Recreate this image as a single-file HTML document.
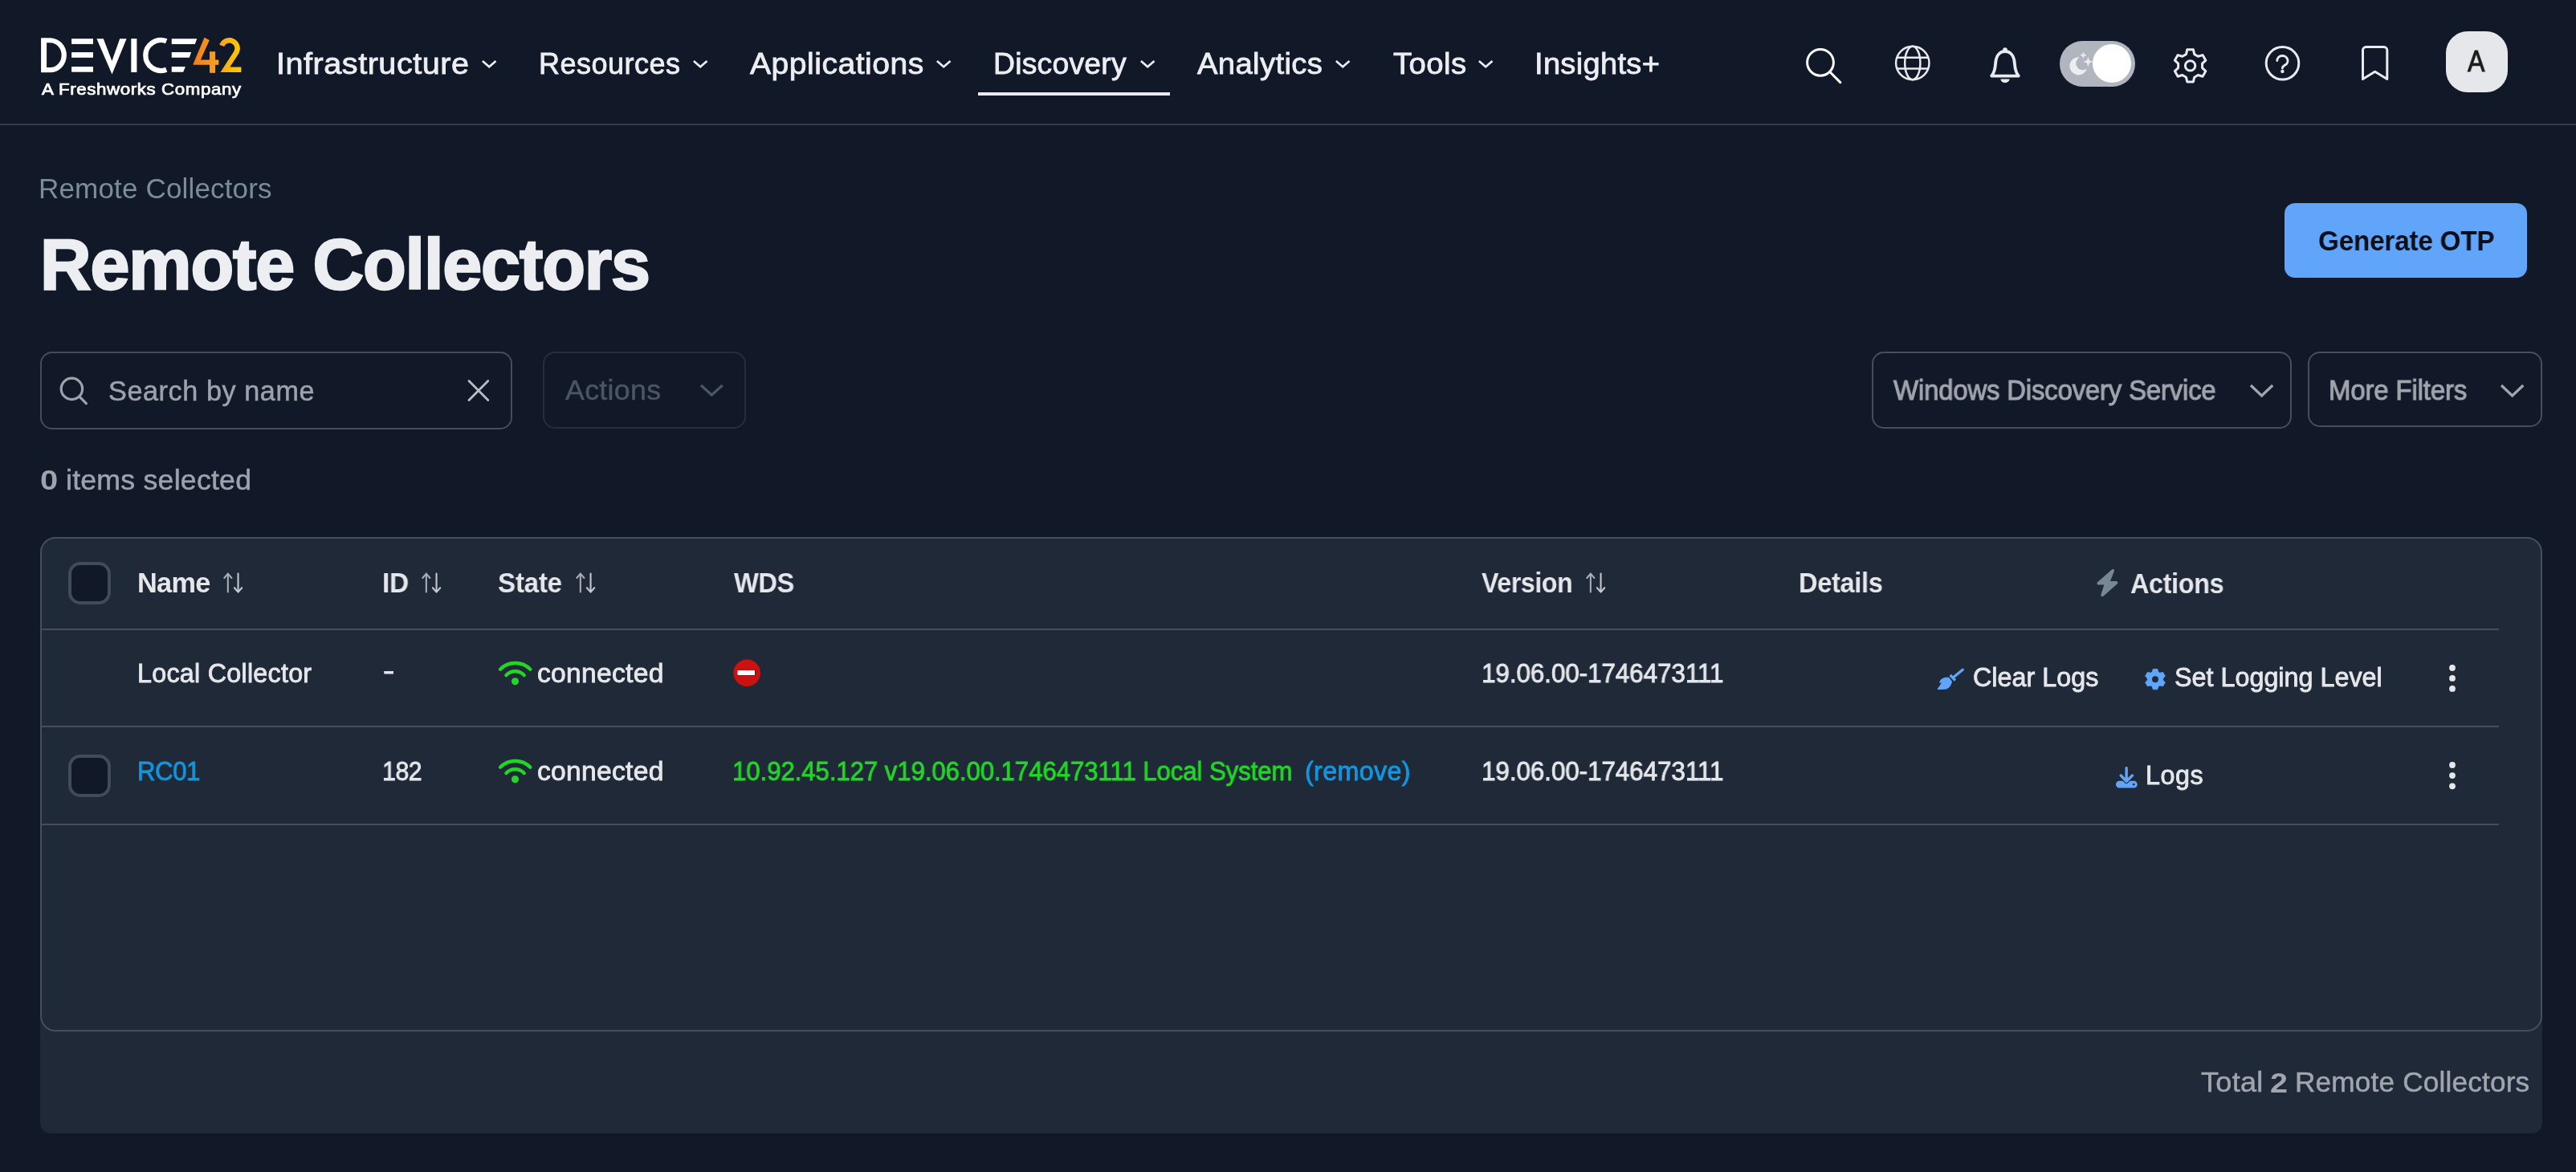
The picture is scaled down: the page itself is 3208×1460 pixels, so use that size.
<!DOCTYPE html>
<html lang="en">
<head>
<meta charset="utf-8">
<title>Remote Collectors - Device42</title>
<style>
*{box-sizing:border-box;margin:0;padding:0}
html,body{width:3208px;height:1460px;overflow:hidden;background:#111827}
body{position:relative;font-family:"Liberation Sans",sans-serif;color:#e5e7eb}
.t{position:absolute;will-change:transform;line-height:1;white-space:pre;transform-origin:0 50%;display:block;font-family:"Liberation Sans",sans-serif;font-style:normal;text-decoration:none}
svg{position:absolute;overflow:visible}
.abs{position:absolute}
header.nav{position:absolute;left:0;top:0;width:3208px;height:156px;background:#111827;border-bottom:2px solid #353b4a}
.underline{position:absolute;left:1218px;top:115px;width:239px;height:4px;background:#e9ebef}
.toggle{position:absolute;left:2565px;top:50.5px;width:94px;height:57.5px;border-radius:29px;background:#b1b5bd}
.knob{position:absolute;left:40.8px;top:4.2px;width:48.4px;height:48.4px;border-radius:50%;background:#fff}
.avatar{position:absolute;left:3045.5px;top:38.5px;width:77.5px;height:76.5px;border-radius:27px;background:#e5e7eb}
.btn{position:absolute;left:2845px;top:253px;width:302px;height:93px;border-radius:13px;background:#60a5fa}
.box{position:absolute;border:2px solid #374151;border-radius:15px;background:#111827}
#search{left:50px;top:438px;width:588px;height:97px;border-color:#444d5c}
#actbox{left:676px;top:438px;width:253px;height:96px;border-color:#252e3d}
#wdsbox{left:2331px;top:438px;width:523px;height:96px;border-color:#464e5c}
#mfbox{left:2874px;top:438px;width:292px;height:94px;border-color:#464e5c}
.card{position:absolute;left:50px;top:669px;width:3116px;height:743px;background:#1f2937;border-radius:19px 19px 13px 13px}
.tbl{position:absolute;left:0;top:0;width:3116px;height:616px;border:2px solid #464e5c;border-radius:19px;background:#1f2937}
.hr{position:absolute;left:0;width:3060px;height:2px;background:#464d5c}
.cb{position:absolute;width:53px;height:52.5px;border:4px solid #424b59;border-radius:15px;background:#111827}
</style>
</head>
<body>
<header class="nav">
<svg style="left:40px;top:40px" width="270" height="60" viewBox="40 40 270 60"><defs><linearGradient id="lg" gradientUnits="userSpaceOnUse" x1="240" y1="0" x2="302" y2="0"><stop offset="0" stop-color="#f47a20"/><stop offset="0.5" stop-color="#f9a01b"/><stop offset="1" stop-color="#ffcd05"/></linearGradient></defs>
<g fill="#fff">
<path fill-rule="evenodd" d="M51.1 47.3H62.5A20.4 21.5 0 0 1 62.5 90.3H51.1ZM58.1 53.3V84.1H62.5A14.1 15.4 0 0 0 62.5 53.3Z"/>
<rect x="89.1" y="48.2" width="26.9" height="6.7"/><rect x="89.1" y="65.1" width="26.9" height="6.7"/><rect x="89.1" y="83" width="26.9" height="6.7"/>
<path d="M120.4 48.15H128.8L139.4 75.9L149.2 48.15H157.6L139.5 92.4Z"/>
<rect x="163.3" y="48.15" width="7.1" height="41.9"/>
<path d="M207.2 51.3A19 19 0 1 0 207.2 86.7" fill="none" stroke="#fff" stroke-width="6.3"/>
<path d="M213.75 48.15H245.3L242.8 54.9H213.75Z"/><path d="M213.75 65.1H238.2L235.8 71.8H213.75Z"/><path d="M213.75 83H230.9L228.2 89.7H213.75Z"/>
</g>
<g fill="url(#lg)"><path d="M254.5 46.8L260.8 50L249.9 74.5H272.4V80.8H240.65V79.4Z"/><rect x="261" y="64.2" width="7.1" height="26.6"/>
<path d="M276.2 56.9A10 10 0 1 1 294 65.7L280.4 86.75H300.4" fill="none" stroke="url(#lg)" stroke-width="6.4"/></g></svg>
<span class="t" id="logosub" style="left:51.90px;top:102.44px;font-size:19.32px;font-weight:400;color:#ffffff;-webkit-text-stroke:0.7px #ffffff;letter-spacing:0.490px;transform:scaleX(1.1577);">A Freshworks Company</span>
<nav>
<span class="t" id="nav1" style="left:343.70px;top:61.64px;font-size:36.01px;font-weight:400;color:#eceef2;-webkit-text-stroke:0.8px #eceef2;letter-spacing:0.481px;transform:scaleX(1.0992);">Infrastructure</span><span class="t" id="nav2" style="left:671.00px;top:61.64px;font-size:36.01px;font-weight:400;color:#eceef2;-webkit-text-stroke:0.8px #eceef2;letter-spacing:0.500px;">Resources</span><span class="t" id="nav3" style="left:933.75px;top:61.64px;font-size:36.01px;font-weight:400;color:#eceef2;-webkit-text-stroke:0.8px #eceef2;letter-spacing:0.461px;transform:scaleX(1.0855);">Applications</span><span class="t" id="nav4" style="left:1237.43px;top:61.64px;font-size:36.01px;font-weight:400;color:#eceef2;-webkit-text-stroke:0.8px #eceef2;letter-spacing:0.226px;transform:scaleX(1.0361);">Discovery</span><span class="t" id="nav5" style="left:1491.00px;top:61.64px;font-size:36.01px;font-weight:400;color:#eceef2;-webkit-text-stroke:0.8px #eceef2;letter-spacing:0.346px;transform:scaleX(1.0616);">Analytics</span><span class="t" id="nav6" style="left:1734.50px;top:61.64px;font-size:36.01px;font-weight:400;color:#eceef2;-webkit-text-stroke:0.8px #eceef2;letter-spacing:0.411px;transform:scaleX(1.0633);">Tools</span><span class="t" id="nav7" style="left:1911.33px;top:61.64px;font-size:36.01px;font-weight:400;color:#eceef2;-webkit-text-stroke:0.8px #eceef2;letter-spacing:0.311px;transform:scaleX(1.0559);">Insights+</span>
<svg style="left:597.5px;top:72px" width="23" height="16" viewBox="597.5 72 23 16"><path d="M600.4 76L608.7 83.2L617.0 76" fill="none" stroke="#eceef2" stroke-width="2.7"/></svg><svg style="left:861px;top:72px" width="23" height="16" viewBox="861 72 23 16"><path d="M863.9 76L872.2 83.2L880.5 76" fill="none" stroke="#eceef2" stroke-width="2.7"/></svg><svg style="left:1164px;top:72px" width="23" height="16" viewBox="1164 72 23 16"><path d="M1166.9 76L1175.2 83.2L1183.5 76" fill="none" stroke="#eceef2" stroke-width="2.7"/></svg><svg style="left:1418px;top:72px" width="23" height="16" viewBox="1418 72 23 16"><path d="M1420.9 76L1429.2 83.2L1437.5 76" fill="none" stroke="#eceef2" stroke-width="2.7"/></svg><svg style="left:1660.5px;top:72px" width="23" height="16" viewBox="1660.5 72 23 16"><path d="M1663.4 76L1671.7 83.2L1680.0 76" fill="none" stroke="#eceef2" stroke-width="2.7"/></svg><svg style="left:1839px;top:72px" width="23" height="16" viewBox="1839 72 23 16"><path d="M1841.9 76L1850.2 83.2L1858.5 76" fill="none" stroke="#eceef2" stroke-width="2.7"/></svg>
<div class="underline"></div>
</nav>
<svg style="left:2244px;top:54px" width="54" height="54" viewBox="2244 54 54 54"><circle cx="2267" cy="77.8" r="16.4" fill="none" stroke="#fff" stroke-width="3"/><path d="M2279.2 90L2291.8 102.6" stroke="#fff" stroke-width="3" stroke-linecap="round"/></svg><svg style="left:2356px;top:53px" width="52" height="52" viewBox="2356 53 52 52"><g fill="none" stroke="#e8eaee" stroke-width="2.5"><circle cx="2381.8" cy="78.5" r="20.7"/><ellipse cx="2381.8" cy="78.5" rx="9.6" ry="20.7"/><path d="M2362.2 71.8H2401.4M2362.2 85.6H2401.4"/></g></svg><svg style="left:2474px;top:56px" width="48" height="52" viewBox="2474 56 48 52"><path d="M2480.2 94.6H2513.8C2509.4 89.5 2509.3 84 2508.8 78C2508 69 2503.4 64 2497 64C2490.6 64 2486 69 2485.2 78C2484.7 84 2484.6 89.5 2480.2 94.6Z" fill="none" stroke="#e8eaee" stroke-width="3.8" stroke-linejoin="round"/><circle cx="2497" cy="62.2" r="2.9" fill="#e8eaee"/><path d="M2491.4 98.6H2502.6A5.6 4.6 0 0 1 2491.4 98.6Z" fill="#e8eaee"/></svg><svg style="left:2702px;top:56px" width="52" height="52" viewBox="2702 56 52 52"><path d="M2722.45 67.60L2723.78 61.86L2731.42 61.86L2732.75 67.60L2737.41 70.29L2743.04 68.57L2746.87 75.19L2742.56 79.21L2742.56 84.59L2746.87 88.61L2743.04 95.23L2737.41 93.51L2732.75 96.20L2731.42 101.94L2723.78 101.94L2722.45 96.20L2717.79 93.51L2712.16 95.23L2708.33 88.61L2712.64 84.59L2712.64 79.21L2708.33 75.19L2712.16 68.57L2717.79 70.29Z" fill="none" stroke="#e8eaee" stroke-width="3" stroke-linejoin="round"/><circle cx="2727.6" cy="81.9" r="6.2" fill="none" stroke="#e8eaee" stroke-width="3"/></svg><svg style="left:2817px;top:53px" width="52" height="52" viewBox="2817 53 52 52"><circle cx="2842.5" cy="78.8" r="20.3" fill="none" stroke="#e8eaee" stroke-width="3"/><path d="M2835.8 75.6A6.6 6.2 0 1 1 2845.4 81.2C2843.2 82.4 2842.4 83.2 2842.4 85" fill="none" stroke="#e8eaee" stroke-width="2.9" stroke-linecap="round"/><circle cx="2842.4" cy="88.9" r="2.2" fill="#e8eaee"/></svg><svg style="left:2937px;top:53px" width="42" height="52" viewBox="2937 53 42 52"><path d="M2942.5 98.6V62.6A4 4 0 0 1 2946.5 58.6H2968.8A4 4 0 0 1 2972.8 62.6V98.6L2957.65 89.2Z" fill="none" stroke="#e8eaee" stroke-width="3" stroke-linejoin="round"/></svg>
<div class="toggle"><svg style="left:0;top:0" width="94.5" height="57.5" viewBox="2565 50.5 94.5 57.5"><path d="M2599.10 84.75A11.1 11.1 0 1 1 2589.99 70.81A8.4 8.4 0 1 0 2599.10 84.75Z" fill="#eceef1"/><path d="M2594.45 64.89999999999999Q2594.45 68.3 2597.85 68.3Q2594.45 68.3 2594.45 71.7Q2594.45 68.3 2591.0499999999997 68.3Q2594.45 68.3 2594.45 64.89999999999999Z" fill="#eceef1" stroke="#eceef1" stroke-width="0.95" stroke-linejoin="round"/><path d="M2600.4 71.5Q2600.4 76.5 2605.4 76.5Q2600.4 76.5 2600.4 81.5Q2600.4 76.5 2595.4 76.5Q2600.4 76.5 2600.4 71.5Z" fill="#eceef1" stroke="#eceef1" stroke-width="1.20" stroke-linejoin="round"/></svg><div class="knob"></div></div>
<div class="avatar"></div><span class="t" id="avatar" style="left:3073.00px;top:58.74px;font-size:36.19px;font-weight:400;color:#1a1a1a;-webkit-text-stroke:0.9px #1a1a1a;transform:scaleX(0.8880);">A</span>
</header>
<main>
<span class="t" id="crumb" style="left:47.93px;top:217.50px;font-size:34.23px;font-weight:400;color:#7b8c9a;letter-spacing:0.137px;transform:scaleX(1.0244);">Remote Collectors</span>
<span class="t" id="h1" style="left:49.90px;top:285.75px;font-size:88.04px;font-weight:700;color:#edeef2;-webkit-text-stroke:2.4px #edeef2;letter-spacing:-1.119px;">Remote Collectors</span>
<div class="btn"></div><span class="t" id="otp" style="left:2887.03px;top:282.80px;font-size:34.24px;font-weight:700;color:#0b0f19;letter-spacing:-0.201px;transform:scaleX(0.9715);">Generate OTP</span>
<div class="box" id="search"></div><span class="t" id="ph" style="left:135.40px;top:469.59px;font-size:34.24px;font-weight:400;color:#9da2ac;-webkit-text-stroke:0.5px #9da2ac;letter-spacing:0.562px;">Search by name</span>
<div class="box" id="actbox"></div><span class="t" id="actdd" style="left:703.60px;top:468.59px;font-size:34.23px;font-weight:400;color:#4b5563;-webkit-text-stroke:0.45px #4b5563;letter-spacing:0.271px;transform:scaleX(1.0459);">Actions</span>
<div class="box" id="wdsbox"></div><span class="t" id="wds" style="left:2358.00px;top:469.04px;font-size:34.17px;font-weight:400;color:#a1a5ac;-webkit-text-stroke:1.0px #a1a5ac;letter-spacing:-0.213px;transform:scaleX(0.9649);">Windows Discovery Service</span>
<div class="box" id="mfbox"></div><span class="t" id="mf" style="left:2900.07px;top:469.04px;font-size:34.17px;font-weight:400;color:#a1a5ac;-webkit-text-stroke:1.0px #a1a5ac;letter-spacing:-0.188px;transform:scaleX(0.9663);">More Filters</span>
<svg style="left:70px;top:466px" width="44" height="44" viewBox="70 466 44 44"><circle cx="89.4" cy="484.4" r="13.2" fill="none" stroke="#9da1ab" stroke-width="3.2"/><path d="M99.2 494.4L107.4 502.6" stroke="#9da1ab" stroke-width="3.2" stroke-linecap="round"/></svg><svg style="left:578px;top:469px" width="36" height="36" viewBox="578 469 36 36"><path d="M584 474.6L607.8 498.6M607.8 474.6L584 498.6" stroke="#b8bcc4" stroke-width="2.8" stroke-linecap="round"/></svg><svg style="left:869px;top:476px" width="34.700000000000045" height="20.5" viewBox="869 476 34.700000000000045 20.5"><path d="M873 480L886.35 492.0L899.7 480" fill="none" stroke="#4b5563" stroke-width="3.3" stroke-linejoin="miter"/></svg><svg style="left:2799.3px;top:475.5px" width="35.19999999999982" height="21.5" viewBox="2799.3 475.5 35.19999999999982 21.5"><path d="M2803.3 479.5L2816.9 492.5L2830.5 479.5" fill="none" stroke="#a1a5ac" stroke-width="3.3" stroke-linejoin="miter"/></svg><svg style="left:3111.2px;top:475.5px" width="35.30000000000018" height="21.5" viewBox="3111.2 475.5 35.30000000000018 21.5"><path d="M3115.2 479.5L3128.85 492.5L3142.5 479.5" fill="none" stroke="#a1a5ac" stroke-width="3.3" stroke-linejoin="miter"/></svg>
<span class="t" id="cnt0" style="left:49.94px;top:581.20px;font-size:34.18px;font-weight:700;color:#9da2ac;transform:scaleX(1.1647);">0</span><span class="t" id="cnt1" style="left:81.52px;top:580.89px;font-size:34.30px;font-weight:400;color:#9da2ac;-webkit-text-stroke:0.5px #9da2ac;letter-spacing:0.216px;transform:scaleX(1.0406);">items selected</span>
<section class="card">
<div class="tbl">
<div class="hr" style="top:112px"></div>
<div class="hr" style="top:233px"></div>
<div class="hr" style="top:355px"></div>
</div>
</section>
<div class="cb" style="left:85px;top:700px"></div>
<div class="cb" style="left:85px;top:940px"></div>
<span class="t" id="th1" style="left:170.50px;top:708.60px;font-size:34.30px;font-weight:700;color:#e5e7eb;letter-spacing:-0.667px;">Name</span><span class="t" id="th2" style="left:475.55px;top:708.60px;font-size:34.30px;font-weight:700;color:#e5e7eb;letter-spacing:-0.256px;transform:scaleX(0.9758);">ID</span><span class="t" id="th3" style="left:619.83px;top:708.60px;font-size:34.30px;font-weight:700;color:#e5e7eb;letter-spacing:-0.246px;transform:scaleX(0.9652);">State</span><span class="t" id="th4" style="left:913.75px;top:708.60px;font-size:34.30px;font-weight:700;color:#e5e7eb;letter-spacing:-0.622px;transform:scaleX(0.9549);">WDS</span><span class="t" id="th5" style="left:1845.30px;top:708.60px;font-size:34.30px;font-weight:700;color:#e5e7eb;letter-spacing:-0.449px;transform:scaleX(0.9379);">Version</span><span class="t" id="th6" style="left:2240.30px;top:708.60px;font-size:34.30px;font-weight:700;color:#e5e7eb;letter-spacing:-0.327px;transform:scaleX(0.9487);">Details</span><span class="t" id="th7" style="left:2652.80px;top:709.80px;font-size:34.30px;font-weight:700;color:#e5e7eb;letter-spacing:-0.397px;transform:scaleX(0.9456);">Actions</span>
<span class="t" id="r1a" style="left:170.80px;top:823.24px;font-size:32.29px;font-weight:400;color:#e5e7eb;-webkit-text-stroke:0.85px #e5e7eb;letter-spacing:0.257px;">Local Collector</span><span class="t" id="r1b" style="left:476.58px;top:820.44px;font-size:32.29px;font-weight:400;color:#e5e7eb;-webkit-text-stroke:0.85px #e5e7eb;transform:scaleX(1.3222);">-</span><span class="t" id="r1c" style="left:668.66px;top:823.24px;font-size:32.29px;font-weight:400;color:#e5e7eb;-webkit-text-stroke:0.85px #e5e7eb;letter-spacing:0.249px;transform:scaleX(1.0423);">connected</span><span class="t" id="r1d" style="left:1844.95px;top:823.24px;font-size:32.29px;font-weight:400;color:#e5e7eb;-webkit-text-stroke:0.85px #e5e7eb;letter-spacing:-0.137px;transform:scaleX(0.9766);">19.06.00-1746473111</span><span class="t" id="r1e" style="left:2456.80px;top:827.64px;font-size:32.29px;font-weight:400;color:#e5e7eb;-webkit-text-stroke:0.85px #e5e7eb;letter-spacing:0.022px;">Clear Logs</span><span class="t" id="r1f" style="left:2707.75px;top:827.64px;font-size:32.29px;font-weight:400;color:#e5e7eb;-webkit-text-stroke:0.85px #e5e7eb;letter-spacing:0.016px;">Set Logging Level</span>
<span class="t" id="r2a" style="left:170.88px;top:944.94px;font-size:32.29px;font-weight:400;color:#1296e0;-webkit-text-stroke:0.85px #1296e0;letter-spacing:-0.351px;transform:scaleX(0.9620);">RC01</span><span class="t" id="r2b" style="left:475.62px;top:944.94px;font-size:32.29px;font-weight:400;color:#e5e7eb;-webkit-text-stroke:0.85px #e5e7eb;letter-spacing:-0.545px;transform:scaleX(0.9397);">182</span><span class="t" id="r2c" style="left:668.66px;top:944.94px;font-size:32.29px;font-weight:400;color:#e5e7eb;-webkit-text-stroke:0.85px #e5e7eb;letter-spacing:0.249px;transform:scaleX(1.0423);">connected</span><span class="t" id="r2w" style="left:912.46px;top:944.94px;font-size:32.29px;font-weight:400;color:#22d626;-webkit-text-stroke:0.85px #22d626;letter-spacing:-0.160px;transform:scaleX(0.9709);">10.92.45.127 v19.06.00.1746473111 Local System</span><span class="t" id="r2r" style="left:1625.00px;top:944.94px;font-size:32.29px;font-weight:400;color:#1296e0;-webkit-text-stroke:0.85px #1296e0;letter-spacing:0.329px;">(remove)</span><span class="t" id="r2d" style="left:1844.95px;top:944.94px;font-size:32.29px;font-weight:400;color:#e5e7eb;-webkit-text-stroke:0.85px #e5e7eb;letter-spacing:-0.137px;transform:scaleX(0.9766);">19.06.00-1746473111</span><span class="t" id="r2e" style="left:2672.40px;top:949.54px;font-size:32.29px;font-weight:400;color:#e5e7eb;-webkit-text-stroke:0.85px #e5e7eb;letter-spacing:0.533px;">Logs</span>
<svg style="left:276.75px;top:711px" width="28" height="30" viewBox="276.75 711 28 30"><g fill="none" stroke-width="2.1" stroke-linecap="round" stroke-linejoin="round"><path d="M283.6 737.4V714.6M279.05 720L283.6 714.6L288.15 720" stroke="#a7acb6"/><path d="M296.3 714.6V737.4M291.65 732.2L296.3 737.6L300.95 732.2" stroke="#c4c8cf"/></g></svg><svg style="left:524.25px;top:711px" width="28" height="30" viewBox="524.25 711 28 30"><g fill="none" stroke-width="2.1" stroke-linecap="round" stroke-linejoin="round"><path d="M531.1 737.4V714.6M526.55 720L531.1 714.6L535.65 720" stroke="#a7acb6"/><path d="M543.8 714.6V737.4M539.15 732.2L543.8 737.6L548.45 732.2" stroke="#c4c8cf"/></g></svg><svg style="left:715.5px;top:711px" width="28" height="30" viewBox="715.5 711 28 30"><g fill="none" stroke-width="2.1" stroke-linecap="round" stroke-linejoin="round"><path d="M722.35 737.4V714.6M717.8 720L722.35 714.6L726.9 720" stroke="#a7acb6"/><path d="M735.05 714.6V737.4M730.4 732.2L735.05 737.6L739.7 732.2" stroke="#c4c8cf"/></g></svg><svg style="left:1974px;top:711px" width="28" height="30" viewBox="1974 711 28 30"><g fill="none" stroke-width="2.1" stroke-linecap="round" stroke-linejoin="round"><path d="M1980.85 737.4V714.6M1976.3 720L1980.85 714.6L1985.4 720" stroke="#a7acb6"/><path d="M1993.55 714.6V737.4M1988.9 732.2L1993.55 737.6L1998.2 732.2" stroke="#c4c8cf"/></g></svg><svg style="left:616px;top:819px" width="52" height="38" viewBox="616 819 52 38"><g fill="none" stroke="#22d626" stroke-width="4.4" stroke-linecap="round"><path d="M623.01 833.80A26.3 26.3 0 0 1 660.39 833.80"/><path d="M630.40 841.12A15.1 15.1 0 0 1 652.70 841.12"/></g><circle cx="641.5" cy="848.8" r="4.6" fill="#22d626"/></svg><svg style="left:616px;top:940.7px" width="52" height="38" viewBox="616 940.7 52 38"><g fill="none" stroke="#22d626" stroke-width="4.4" stroke-linecap="round"><path d="M623.01 955.50A26.3 26.3 0 0 1 660.39 955.50"/><path d="M630.40 962.82A15.1 15.1 0 0 1 652.70 962.82"/></g><circle cx="641.5" cy="970.5" r="4.6" fill="#22d626"/></svg><svg style="left:911px;top:819px" width="38" height="38" viewBox="911 819 38 38"><circle cx="930.2" cy="838.3" r="16.8" fill="#cc1111"/><rect x="918" y="834.5" width="23.4" height="7.2" fill="#b30d0d"/><rect x="940" y="835.1" width="1.2" height="5.9" fill="#151a26"/><rect x="918.5" y="835.1" width="21.6" height="5.9" fill="#fff"/></svg><svg style="left:2608px;top:706px" width="34" height="40" viewBox="2608 706 34 40"><path d="M2631.2 710.8L2613.3 726.7H2622.8L2618.1 741.3L2635.6 725.9H2625.3Z" fill="#778895" stroke="#778895" stroke-width="3.6" stroke-linejoin="round"/></svg><svg style="left:2410px;top:830px" width="40" height="32" viewBox="2410 830 40 32"><path d="M2444.3 834.3L2432.4 844.1" stroke="#60a5fa" stroke-width="3.3" stroke-linecap="round"/><path d="M2428.7 841L2434.9 847.6" stroke="#60a5fa" stroke-width="3.3"/><path d="M2427.2 843.9C2422.5 843.2 2418 844.6 2416.2 847.6L2414.9 850.9L2417.8 849.9C2416.5 853 2415 855.3 2412.9 857.6L2413 859C2418 859.3 2421.5 859 2424 858.6C2428 856.8 2430.3 853.2 2431 849Z" fill="#60a5fa"/></svg><svg style="left:2668px;top:830px" width="32" height="32" viewBox="2668 830 32 32"><path fill-rule="evenodd" d="M2680.05 837.29L2681.32 833.53L2686.68 833.53L2687.95 837.29L2689.70 838.30L2693.59 837.52L2696.27 842.16L2693.65 845.14L2693.65 847.16L2696.27 850.14L2693.59 854.78L2689.70 854.00L2687.95 855.01L2686.68 858.77L2681.32 858.77L2680.05 855.01L2678.30 854.00L2674.41 854.78L2671.73 850.14L2674.35 847.16L2674.35 845.14L2671.73 842.16L2674.41 837.52L2678.30 838.30ZM2687.95 846.15A3.95 3.95 0 1 0 2680.05 846.15A3.95 3.95 0 1 0 2687.95 846.15Z" fill="#60a5fa"/><path d="M2680.05 837.29L2681.32 833.53L2686.68 833.53L2687.95 837.29L2689.70 838.30L2693.59 837.52L2696.27 842.16L2693.65 845.14L2693.65 847.16L2696.27 850.14L2693.59 854.78L2689.70 854.00L2687.95 855.01L2686.68 858.77L2681.32 858.77L2680.05 855.01L2678.30 854.00L2674.41 854.78L2671.73 850.14L2674.35 847.16L2674.35 845.14L2671.73 842.16L2674.41 837.52L2678.30 838.30Z" fill="none" stroke="#60a5fa" stroke-width="0.9" stroke-linejoin="round"/></svg><svg style="left:2632px;top:952px" width="34" height="32" viewBox="2632 952 34 32"><rect x="2635" y="972.8" width="26.7" height="8.7" rx="4.3" fill="#60a5fa"/><circle cx="2657.2" cy="977.2" r="1.3" fill="#1f2937"/><path d="M2641.2 966L2648.15 973.3L2655.5 966" fill="none" stroke="#1f2937" stroke-width="5.6" stroke-linecap="round" stroke-linejoin="round"/><path d="M2648.15 956.7V972.6M2641.2 966L2648.15 973.3L2655.5 966" fill="none" stroke="#60a5fa" stroke-width="3.4" stroke-linecap="round" stroke-linejoin="round"/></svg><svg style="left:3046px;top:825.6px" width="16" height="38" viewBox="3046 825.6 16 38"><circle cx="3054" cy="831.6" r="3.9" fill="#e5e7eb"/><circle cx="3054" cy="844.5" r="3.9" fill="#e5e7eb"/><circle cx="3054" cy="857.5" r="3.9" fill="#e5e7eb"/></svg><svg style="left:3046px;top:947.4px" width="16" height="38" viewBox="3046 947.4 16 38"><circle cx="3054" cy="953.4" r="3.9" fill="#e5e7eb"/><circle cx="3054" cy="966.5" r="3.9" fill="#e5e7eb"/><circle cx="3054" cy="979.7" r="3.9" fill="#e5e7eb"/></svg>
<span class="t" id="ft1" style="left:2741.20px;top:1331.49px;font-size:34.17px;font-weight:400;color:#a0a5ae;-webkit-text-stroke:0.5px #a0a5ae;letter-spacing:0.302px;transform:scaleX(1.0546);">Total</span><span class="t" id="ft2" style="left:2826.85px;top:1331.80px;font-size:34.24px;font-weight:700;color:#a0a5ae;transform:scaleX(1.1529);">2</span><span class="t" id="ft3" style="left:2857.74px;top:1331.49px;font-size:34.17px;font-weight:400;color:#a0a5ae;-webkit-text-stroke:0.5px #a0a5ae;letter-spacing:0.168px;transform:scaleX(1.0299);">Remote Collectors</span>
</main>
</body>
</html>
